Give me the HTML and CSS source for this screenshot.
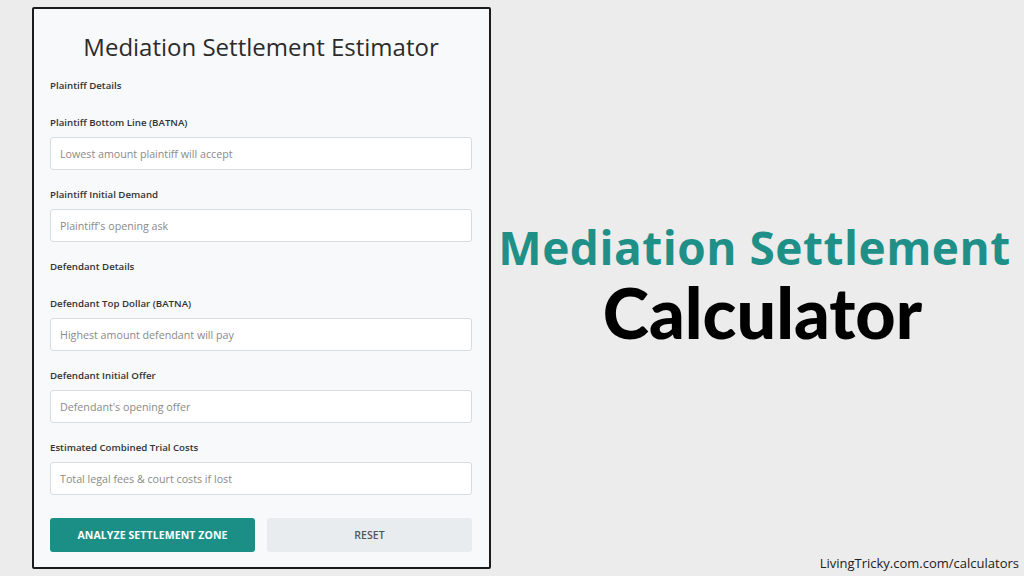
FILE: index.html
```html
<!DOCTYPE html>
<html lang="en">
<head>
<meta charset="utf-8">
<title>Mediation Settlement Estimator</title>
<link rel="stylesheet" href="styles.css">
</head>
<body>
<div class="page">
  <div class="card">
    <h1 class="card-title">Mediation Settlement Estimator</h1>
    <div class="section-head">Plaintiff Details</div>
    <div class="field">
      <label class="field-label">Plaintiff Bottom Line (BATNA)</label>
      <input class="field-input" type="text" placeholder="Lowest amount plaintiff will accept">
    </div>
    <div class="field">
      <label class="field-label">Plaintiff Initial Demand</label>
      <input class="field-input" type="text" placeholder="Plaintiff's opening ask">
    </div>
    <div class="section-head">Defendant Details</div>
    <div class="field">
      <label class="field-label">Defendant Top Dollar (BATNA)</label>
      <input class="field-input" type="text" placeholder="Highest amount defendant will pay">
    </div>
    <div class="field">
      <label class="field-label">Defendant Initial Offer</label>
      <input class="field-input" type="text" placeholder="Defendant's opening offer">
    </div>
    <div class="field field-last">
      <label class="field-label">Estimated Combined Trial Costs</label>
      <input class="field-input" type="text" placeholder="Total legal fees &amp; court costs if lost">
    </div>
    <div class="actions">
      <button class="btn btn-primary">ANALYZE SETTLEMENT ZONE</button>
      <button class="btn btn-secondary">RESET</button>
    </div>
  </div>
  <div class="hero">
    <div class="hero-line1">Mediation Settlement</div>
    <div class="hero-line2">Calculator</div>
  </div>
</div>
<div class="footer">LivingTricky.com.com/calculators</div>
</body>
</html>
```
FILE: styles.css
```css
* { box-sizing: border-box; }
html, body {
  margin: 0;
  padding: 0;
  width: 1024px;
  height: 576px;
  overflow: hidden;
  background: #ececec;
  font-family: "Open Sans", "Noto Sans", sans-serif;
}
body { position: relative; }
.page {
  display: flex;
  align-items: flex-start;
  padding: 7px 0 0 32px;
}
.card {
  width: 459px;
  height: 562px;
  border: 2px solid #1b1b1b;
  border-radius: 2px;
  background: #f8f9fa;
  padding: 23px 17px 0 16px;
  display: flex;
  flex-direction: column;
}
.card-title {
  margin: 0 0 17px;
  font-family: "Open Sans", sans-serif;
  font-weight: 500;
  font-size: 24px;
  line-height: 30px;
  text-align: center;
  color: #2b2b2b;
}
.section-head, .field-label {
  font-family: "Open Sans", sans-serif;
  font-weight: 600;
  font-size: 9.7px;
  line-height: 14px;
  color: #333;
  display: block;
}
.section-head { margin-bottom: 23px; }
.field { display: flex; flex-direction: column; margin-bottom: 18px; }
.field-last { margin-bottom: 23px; }
.field-label { margin-bottom: 7px; }
.field-input {
  height: 33px;
  width: 100%;
  border: 1px solid #d9dcdf;
  border-radius: 3px;
  background: #fff;
  padding: 0 9px;
  font-family: "Open Sans", sans-serif;
  font-size: 10.7px;
  color: #333;
  outline: none;
}
.field-input::placeholder { color: #8a8a8a; }
.actions {
  display: flex;
  gap: 12px;
}
.btn {
  flex: 1;
  height: 34px;
  border: none;
  border-radius: 3px;
  font-family: "Open Sans", sans-serif;
  font-weight: 700;
  font-size: 10.5px;
  letter-spacing: 0.1px;
}
.btn-primary { background: #1b8f85; color: #fff; }
.btn-secondary { background: #e9ecef; color: #555; font-weight: 600; }
.hero {
  flex: 1;
  padding-top: 212px;
  text-align: center;
}
.hero-line1 {
  font-family: "Open Sans", sans-serif;
  font-weight: 700;
  font-size: 46px;
  line-height: 56px;
  color: #1f9088;
  letter-spacing: 0.5px;
  margin-left: -6px;
}
.hero-line2 {
  font-family: "Lato", sans-serif;
  font-weight: 900;
  font-size: 70px;
  line-height: 74px;
  color: #000;
  padding-left: 10px;
}
.footer {
  position: absolute;
  right: 5px;
  bottom: 4px;
  font-family: "Open Sans", sans-serif;
  font-size: 13px;
  color: #222;
}
```
